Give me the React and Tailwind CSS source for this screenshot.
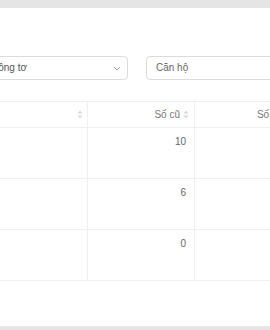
import React from "react";

function SortIcon() {
  return (
    <svg width="6" height="9" viewBox="0 0 6 9" className="shrink-0">
      <path d="M3 0.5 L5.5 3.6 L0.5 3.6 Z" fill="#d9d9de" />
      <path d="M3 8.5 L5.5 5.4 L0.5 5.4 Z" fill="#d9d9de" />
    </svg>
  );
}

const rows = ["10", "6", "0"];

export default function App() {
  return (
    <div
      className="w-[270px] h-[330px] overflow-hidden bg-[#e5e5e5] pt-[8px]"
      style={{ fontFamily: '"Liberation Sans", Arial, sans-serif' }}
    >
      <div className="bg-white h-[318px] w-[420px] ml-[-16px] pt-[48px]">
        <div className="flex gap-[18px]">
          <div className="w-[144px] h-[24px] border border-[#dcdcdc] rounded-[4px] flex items-center justify-between pl-[6px] pr-[6px]">
            <span className="text-[10px] text-[#555] leading-none">Công tơ</span>
            <svg width="8" height="5" viewBox="0 0 8 5">
              <path d="M1 1 L4 4 L7 1" stroke="#a0a0a0" strokeWidth="1" fill="none" />
            </svg>
          </div>
          <div className="w-[200px] h-[24px] border border-[#dcdcdc] rounded-[4px] flex items-center pl-[9px]">
            <span className="text-[10px] text-[#666] leading-none">Căn hộ</span>
          </div>
        </div>
        <div className="mt-[21px] border-t border-[#f0f0f2] w-[320px]">
          <div className="grid grid-cols-[104px_107px_109px] h-[26px] bg-white">
            <div className="border-r border-b border-[#f0f0f2] flex items-center justify-end pr-[4px]">
              <SortIcon />
            </div>
            <div className="border-r border-b border-[#f0f0f2] flex items-center justify-end gap-[3px] pr-[5px]">
              <span className="text-[10px] text-[#777]">Số cũ</span>
              <SortIcon />
            </div>
            <div className="border-r border-b border-[#f0f0f2] flex items-center justify-end gap-[3px] pr-[5px]">
              <span className="text-[10px] text-[#777]">Số mới</span>
              <SortIcon />
            </div>
          </div>
          {rows.map((v, i) => (
            <div key={i} className="grid grid-cols-[104px_107px_109px] h-[51px]">
              <div className="border-r border-b border-[#f0f0f2]" />
              <div className="border-r border-b border-[#f0f0f2] flex justify-end pr-[8px] pt-[8px]">
                <span className="text-[10px] text-[#666] leading-[12px]">{v}</span>
              </div>
              <div className="border-r border-b border-[#f0f0f2]" />
            </div>
          ))}
        </div>
      </div>
    </div>
  );
}
